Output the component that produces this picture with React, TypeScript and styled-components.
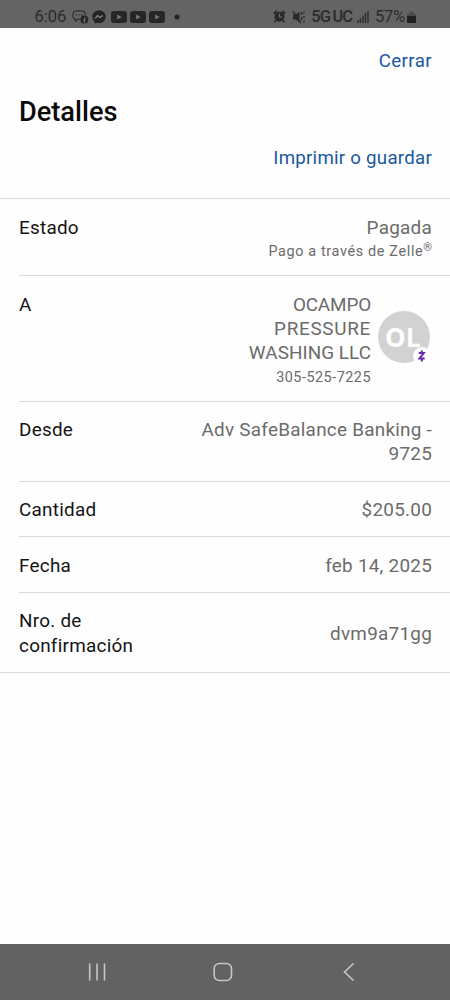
import React from 'react';
import styled, { createGlobalStyle } from 'styled-components';

const GlobalStyle = createGlobalStyle`
  * { box-sizing: border-box; }
  body { margin: 0; background: #fefefe; font-family: Roboto, "Liberation Sans", sans-serif; }
`;

const Screen = styled.div`
  display: flex;
  flex-direction: column;
  width: 450px;
  height: 1000px;
  overflow: hidden;
  background: #fefefe;
`;

const StatusBar = styled.header`
  display: flex;
  justify-content: space-between;
  flex: none;
  height: 28px;
  padding: 5px 34px 0 34px;
  background: #646464;
  color: #2b2b2b;
`;

const StatusGroup = styled.div`
  display: flex;
  align-items: center;
  height: 23px;
`;

const StatusText = styled.span<{ $weight?: number; $spacing?: number; $left?: number }>`
  margin-left: ${(p) => p.$left ?? 0}px;
  font-size: 16.5px;
  line-height: 23px;
  font-weight: ${(p) => p.$weight ?? 400};
  letter-spacing: ${(p) => p.$spacing ?? 0}px;
  white-space: nowrap;
`;

const StatusIcon = styled.svg<{ $left?: number }>`
  display: block;
  flex: none;
  margin-left: ${(p) => p.$left ?? 0}px;
`;

const Top = styled.section`
  display: flex;
  flex-direction: column;
  flex: none;
  height: 171px;
  padding: 21px 18px 0 19px;
  border-bottom: 1px solid #d8d8d8;
`;

const LinkButton = styled.button<{ $spacing?: number }>`
  align-self: flex-end;
  padding: 0;
  border: 0;
  background: none;
  color: #1a58a0;
  font: 400 18.7px/24px Roboto, "Liberation Sans", sans-serif;
  letter-spacing: ${(p) => p.$spacing ?? 0.25}px;
`;

const Title = styled.h1`
  margin: 22px 0 16px;
  color: #0a0a0a;
  font-size: 27.2px;
  line-height: 35px;
  font-weight: 500;
`;

const Details = styled.dl`
  flex: none;
  margin: 0;
  padding-left: 19px;
  border-bottom: 1px solid #d8d8d8;
`;

const Row = styled.div<{ $height: number; $top?: number; $center?: boolean }>`
  display: flex;
  justify-content: space-between;
  align-items: ${(p) => (p.$center ? 'center' : 'flex-start')};
  height: ${(p) => p.$height}px;
  padding: ${(p) => p.$top ?? 16.6}px 18px ${(p) => (p.$center ? 14 : 0)}px 0;

  & + & { border-top: 1px solid #d8d8d8; }
`;

const Label = styled.dt`
  color: #141414;
  font-size: 18.9px;
  line-height: 24.4px;
  letter-spacing: 0.25px;
`;

const Value = styled.dd`
  margin: 0;
  color: #6b6b6b;
  font-size: 18.9px;
  line-height: 24.4px;
  letter-spacing: 0.25px;
  text-align: right;
`;

const Note = styled.div<{ $spacing: number }>`
  font-size: 14.4px;
  line-height: 24px;
  letter-spacing: ${(p) => p.$spacing}px;

  sup { font-size: 11px; line-height: 0; vertical-align: 5px; letter-spacing: 0; }
`;

const Payee = styled.dd`
  display: flex;
  align-items: flex-start;
  gap: 7px;
  margin: 0;
`;

const PayeeText = styled.div`
  color: #6b6b6b;
  font-size: 18.9px;
  line-height: 24.4px;
  text-align: right;
`;

const NameLine = styled.div<{ $spacing: number }>`
  letter-spacing: ${(p) => p.$spacing}px;
`;

const Avatar = styled.div`
  position: relative;
  width: 52px;
  height: 52px;
  margin: 18.4px 2px 0 0;
  padding-left: 7px;
  border-radius: 50%;
  background: #d2d2d2;
  color: #fefefe;
  font: 700 26px/53px "Open Sans", "Noto Sans", sans-serif;
`;

const ZelleBadge = styled.svg`
  position: absolute;
  right: -2px;
  bottom: -3px;
`;

const NavBar = styled.nav`
  display: flex;
  align-items: center;
  flex: none;
  height: 56px;
  margin-top: auto;
  padding-left: 87px;
  background: #626262;
`;

const NavIcon = styled.svg<{ $left?: number }>`
  flex: none;
  margin-left: ${(p) => p.$left ?? 0}px;
`;

const VideoIcon = ({ left }: { left: number }) => (
  <StatusIcon $left={left} width="16" height="12" viewBox="0 0 16 12">
    <rect width="16" height="12" rx="3" fill="#262626" />
    <path d="M6.2 3.6 10.6 6 6.2 8.4z" fill="#777" />
  </StatusIcon>
);

export default function App() {
  return (
    <Screen>
      <GlobalStyle />
      <StatusBar>
        <StatusGroup>
          <StatusText $left={0.5}>6:06</StatusText>
          <StatusIcon $left={5.5} width="17" height="14" viewBox="0 0 17 14">
            <path d="M8 9.2H6L3.6 11.3V9.2H2.3Q.9 8.2.9 5.2T2.3 1.3Q7 .5 11.8 1.3 13.3 2.2 13.2 5" fill="none" stroke="#2b2b2b" strokeWidth="1.1" />
            <path d="M3.7 4.8h1.2M6.5 4.8h1.2M9.3 4.8h1.2" stroke="#2b2b2b" strokeWidth="1.2" />
            <circle cx="12.3" cy="9.5" r="4" fill="#262626" />
            <path d="M12.4 13.4V8.7Q12.4 7.5 13.8 7.7M11 10h2.8" fill="none" stroke="#707070" strokeWidth="1" />
          </StatusIcon>
          <StatusIcon $left={3.5} width="14" height="14" viewBox="0 0 14 14">
            <path d="M7 .4C3.1.4.3 3.1.3 6.7c0 2 .9 3.7 2.2 4.8v2l2.1-.8c.8.2 1.6.3 2.4.3 3.9 0 6.7-2.7 6.7-6.3S10.9.4 7 .4z" fill="#242424" />
            <path d="m3.2 8.5 2.3-3 2.5 2 2.8-2.2" fill="none" stroke="#777" strokeWidth="1.5" />
          </StatusIcon>
          <VideoIcon left={4.5} />
          <VideoIcon left={3.2} />
          <VideoIcon left={3.2} />
          <StatusIcon $left={9} width="6" height="6" viewBox="0 0 6 6">
            <circle cx="3" cy="3" r="2.6" fill="#242424" />
          </StatusIcon>
        </StatusGroup>
        <StatusGroup>
          <StatusIcon width="13" height="13" viewBox="0 0 13 13">
            <circle cx="6.5" cy="6.7" r="5" fill="#292929" />
            <path d="M.8 3.6 3.8 1M12.2 3.6 9.2 1M2.8 10.5 1.5 12.3M10.2 10.5l1.3 1.8" stroke="#292929" strokeWidth="1.7" />
            <path d="M6.5 3.8v3.2h2.6" fill="none" stroke="#707070" strokeWidth="1.1" />
          </StatusIcon>
          <StatusIcon $left={6} width="14" height="14" viewBox="0 0 14 14">
            <path d="M1 4.5h2.6L7.6 1.5v11L3.6 9.5H1z" fill="#292929" />
            <path d="M.8 1 9 12.8" stroke="#292929" strokeWidth="1.3" />
            <path d="M9.7 2v3M9.7 7v3M12 1.5v2M12 6v2M12 10.5v2" stroke="#292929" strokeWidth="1.3" />
          </StatusIcon>
          <StatusText $weight={500} $spacing={-1} $left={5}>5G</StatusText>
          <StatusText $weight={500} $spacing={-1} $left={2.5}>UC</StatusText>
          <StatusIcon $left={5.5} width="12" height="13" viewBox="0 0 12 13">
            <path d="M1 10v3M3.5 8v5M6 5.5V13M8.5 3v10M11 1v12" stroke="#303030" strokeWidth="1.5" />
          </StatusIcon>
          <StatusText $spacing={-0.2} $left={5.5}>57%</StatusText>
          <StatusIcon $left={2} width="9" height="12" viewBox="0 0 9 12">
            <path d="M2 4V2.5Q2 .5 4.5.5T7 2.5V4" fill="#4b4b4b" />
            <path d="M0 3h9v3H0z" fill="#4b4b4b" />
            <rect y="5" width="9" height="7" rx="1" fill="#222" />
          </StatusIcon>
        </StatusGroup>
      </StatusBar>

      <Top>
        <LinkButton $spacing={0.4}>Cerrar</LinkButton>
        <Title>Detalles</Title>
        <LinkButton>Imprimir o guardar</LinkButton>
      </Top>

      <Details>
        <Row $height={76}>
          <Label>Estado</Label>
          <Value>
            Pagada
            <Note $spacing={0.65}>Pago a través de Zelle<sup>®</sup></Note>
          </Value>
        </Row>
        <Row $height={126}>
          <Label>A</Label>
          <Payee>
            <PayeeText>
              <NameLine $spacing={-0.15}>OCAMPO</NameLine>
              <NameLine $spacing={0.7}>PRESSURE</NameLine>
              <NameLine $spacing={0.05}>WASHING LLC</NameLine>
              <Note $spacing={0.5}>305-525-7225</Note>
            </PayeeText>
            <Avatar>
              OL
              <ZelleBadge width="20" height="20" viewBox="0 0 20 20">
                <circle cx="10" cy="10" r="9" fill="#fefefe" />
                <path d="M6.8 7h5L7.5 12.5h5.2M9.8 4.5V7M9.8 12.5V15.5" fill="none" stroke="#6528ad" strokeWidth="2" />
              </ZelleBadge>
            </Avatar>
          </Payee>
        </Row>
        <Row $height={80} $top={16}>
          <Label>Desde</Label>
          <Value>Adv SafeBalance Banking -<br />9725</Value>
        </Row>
        <Row $height={55} $top={16}>
          <Label>Cantidad</Label>
          <Value>$205.00</Value>
        </Row>
        <Row $height={56}>
          <Label>Fecha</Label>
          <Value>feb 14, 2025</Value>
        </Row>
        <Row $height={80} $center>
          <Label>Nro. de<br />confirmación</Label>
          <Value>dvm9a71gg</Value>
        </Row>
      </Details>

      <NavBar>
        <NavIcon width="20" height="20" viewBox="0 0 20 20">
          <path d="M2.7 1.5v17M10 1.5v17M17.5 1.5v17" stroke="#c6c6c6" strokeWidth="1.6" />
        </NavIcon>
        <NavIcon $left={106} width="20" height="20" viewBox="0 0 20 20">
          <rect x="1.2" y="1.5" width="17.3" height="17" rx="5" fill="none" stroke="#c6c6c6" strokeWidth="1.6" />
        </NavIcon>
        <NavIcon $left={109} width="14" height="20" viewBox="0 0 14 20">
          <path d="M11.500 1.500 2.500 10l9 8.500" fill="none" stroke="#c6c6c6" strokeWidth="1.6" />
        </NavIcon>
      </NavBar>
    </Screen>
  );
}
